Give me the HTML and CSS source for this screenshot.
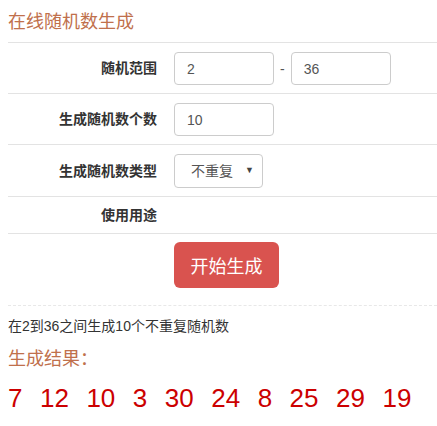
FILE: index.html
```html
<!DOCTYPE html>
<html lang="zh-CN">
<head>
    <meta charset="UTF-8">
    <meta name="viewport" content="width=device-width, initial-scale=1.0">
    <title>在线随机数生成</title>
    <link rel="stylesheet" href="styles.css">
</head>
<body>
  <h1 class="title">在线随机数生成</h1>

  <form class="gen-form">
    <div class="row">
      <label class="row-label">随机范围</label>
      <div class="row-field">
        <input class="box" type="text" value="2">
        <span class="dash">-</span>
        <input class="box" type="text" value="36">
      </div>
    </div>
    <div class="row">
      <label class="row-label">生成随机数个数</label>
      <div class="row-field">
        <input class="box" type="text" value="10">
      </div>
    </div>
    <div class="row">
      <label class="row-label">生成随机数类型</label>
      <div class="row-field">
        <div class="select-wrap">
          <select class="box select">
            <option>不重复</option>
            <option>可重复</option>
          </select>
        </div>
      </div>
    </div>
    <div class="row row-text">
      <label class="row-label">使用用途</label>
      <div class="row-field"></div>
    </div>
    <div class="row row-action">
      <span></span>
      <div class="row-field">
        <button type="button" class="btn-go">开始生成</button>
      </div>
    </div>
  </form>

  <p class="desc">在2到36之间生成10个不重复随机数</p>
  <h2 class="result-title">生成结果：</h2>
  <div class="numbers">
    <span>7</span><span>12</span><span>10</span><span>3</span><span>30</span><span>24</span><span>8</span><span>25</span><span>29</span><span>19</span>
  </div>
</body>
</html>
```

FILE: styles.css
```css
body {
    margin: 0;
    padding: 0 0 0 8px;
    font-family: "Liberation Sans", "Noto Sans CJK SC", sans-serif;
    color: #333;
    background: #fff;
}
.title {
    margin: 0;
    padding-top: 10px;
    margin-bottom: 8px;
    font-size: 18px;
    line-height: 24px;
    font-weight: normal;
    color: #c0704c;
}
.row {
    display: grid;
    grid-template-columns: 149px auto;
    column-gap: 17px;
    align-items: center;
    border-top: 1px solid #e3e3e3;
    padding: 9px 0 8px;
}
.row-label {
    text-align: right;
    font-size: 14px;
    font-weight: bold;
    line-height: 19px;
    color: #333;
}
.row-field {
    display: flex;
    align-items: center;
}
.box {
    box-sizing: border-box;
    width: 100px;
    height: 33px;
    padding: 0 12px;
    border: 1px solid #ccc;
    border-radius: 4px;
    font-family: "Liberation Sans", "Noto Sans CJK SC", sans-serif;
    font-size: 14px;
    color: #555;
    background: #fff;
}
.dash {
    margin: 0 6px;
    font-size: 14px;
    color: #555;
}
.select-wrap {
    position: relative;
}
.select {
    width: 89px;
    height: 34px;
    padding: 0 16px;
    appearance: none;
    -webkit-appearance: none;
}
.select-wrap::after {
    content: "▼";
    position: absolute;
    right: 9px;
    top: 11px;
    font-size: 9px;
    color: #444;
    pointer-events: none;
}
.row-action {
    padding: 8px 0 17px;
    border-bottom: 1px dashed #e8e8e8;
}
.btn-go {
    width: 105px;
    height: 46px;
    border: none;
    border-radius: 6px;
    background-color: #d9534f;
    color: #fff;
    font-family: "Liberation Sans", "Noto Sans CJK SC", sans-serif;
    font-size: 18px;
    cursor: pointer;
}
.desc {
    margin: 10px 0 0;
    font-size: 14px;
    line-height: 20px;
    color: #333;
}
.result-title {
    margin: 11px 0 0;
    font-size: 18px;
    line-height: 24px;
    font-weight: normal;
    color: #c0704c;
}
.numbers {
    display: flex;
    gap: 17.5px;
    margin-top: 10px;
    font-size: 26px;
    line-height: 34px;
    color: #cc0000;
}
```
